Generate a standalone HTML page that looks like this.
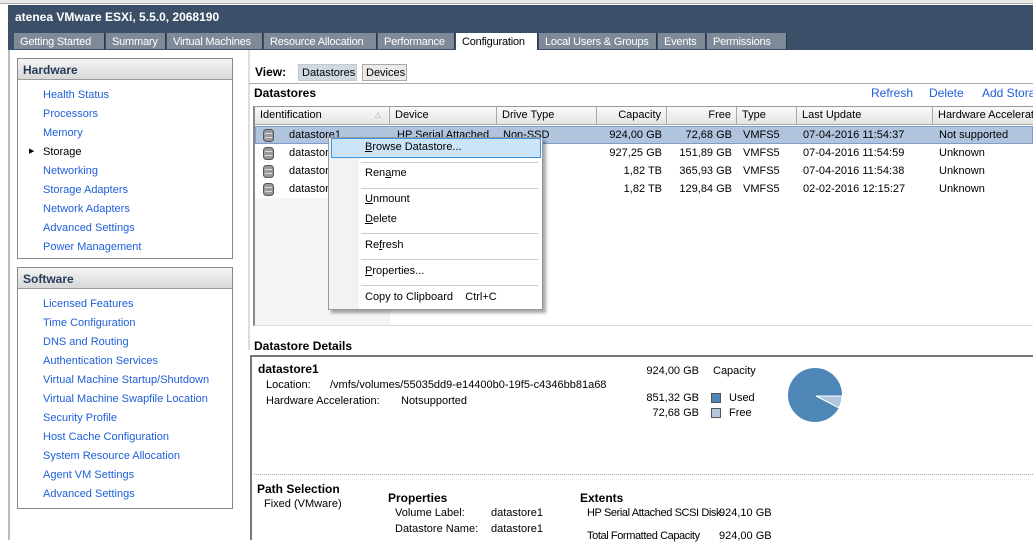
<!DOCTYPE html>
<html><head><meta charset="utf-8"><style>
*{margin:0;padding:0;box-sizing:border-box}
body{width:1033px;height:540px;overflow:hidden;background:#fff;font-family:"Liberation Sans","DejaVu Sans",sans-serif;font-size:11px;color:#000;position:relative}
.a{position:absolute;white-space:nowrap}
.b{font-weight:bold}
.lk{color:#1f5fd8}
.hdr{position:absolute;background:linear-gradient(#f4f4f4,#d8d8d8);border-bottom:1px solid #999;font-weight:bold;color:#243b5a;font-size:12px;padding:4px 5px}
.box{position:absolute;border:1px solid #888;background:#fff}
.tab{position:absolute;top:33px;height:16px;background:#7f8a99;color:#fff;font-size:11px;line-height:14px;padding:2px 0 0 6px;border-right:1px solid #2a3a4e;white-space:nowrap;overflow:hidden;letter-spacing:-0.2px}
.th{position:absolute;top:107px;height:18px;background:linear-gradient(#fafafa,#e4e4e4);border-right:1px solid #aaa;border-bottom:1px solid #aaa;padding:2px 5px;font-size:11px;white-space:nowrap;overflow:hidden}
.r{text-align:right}
.mi{position:absolute;left:36px;font-size:11px;white-space:nowrap}
.sep{position:absolute;left:32px;right:4px;height:1px;background:#ccc}
</style></head><body>
<div class="a" style="left:0;top:0;width:1033px;height:4px;background:#e8e8e8;border-bottom:1px solid #aaa"></div>
<div class="a" style="left:8px;top:5px;width:1025px;height:45px;background:#3b5068"></div>
<div class="a b" style="left:15px;top:10px;color:#fff;font-size:12px">atenea VMware ESXi, 5.5.0, 2068190</div>
<div class="tab" style="left:14px;width:91px">Getting Started</div>
<div class="tab" style="left:106px;width:60px">Summary</div>
<div class="tab" style="left:167px;width:96px">Virtual Machines</div>
<div class="tab" style="left:264px;width:113px">Resource Allocation</div>
<div class="tab" style="left:378px;width:77px">Performance</div>
<div class="tab" style="left:456px;width:82px;background:#fff;color:#000;height:17px">Configuration</div>
<div class="tab" style="left:539px;width:118px">Local Users &amp; Groups</div>
<div class="tab" style="left:658px;width:48px">Events</div>
<div class="tab" style="left:707px;width:80px">Permissions</div>
<div class="a" style="left:8px;top:50px;width:2px;height:490px;background:#bbb"></div>
<div class="a" style="left:248px;top:50px;width:2px;height:300px;background:#ddd"></div>

<div class="box" style="left:17px;top:58px;width:216px;height:201px">
<div class="hdr" style="left:0;top:0;width:214px;height:21px">Hardware</div></div>
<div class="a lk" style="left:43px;top:89px">Health Status</div>
<div class="a lk" style="left:43px;top:108px">Processors</div>
<div class="a lk" style="left:43px;top:127px">Memory</div>
<div class="a" style="left:29px;top:147px;font-size:7px">&#9654;</div>
<div class="a" style="left:43px;top:146px">Storage</div>
<div class="a lk" style="left:43px;top:165px">Networking</div>
<div class="a lk" style="left:43px;top:184px">Storage Adapters</div>
<div class="a lk" style="left:43px;top:203px">Network Adapters</div>
<div class="a lk" style="left:43px;top:222px">Advanced Settings</div>
<div class="a lk" style="left:43px;top:241px">Power Management</div>

<div class="box" style="left:17px;top:267px;width:216px;height:242px">
<div class="hdr" style="left:0;top:0;width:214px;height:21px">Software</div></div>
<div class="a lk" style="left:43px;top:298px">Licensed Features</div>
<div class="a lk" style="left:43px;top:317px">Time Configuration</div>
<div class="a lk" style="left:43px;top:336px">DNS and Routing</div>
<div class="a lk" style="left:43px;top:355px">Authentication Services</div>
<div class="a lk" style="left:43px;top:374px">Virtual Machine Startup/Shutdown</div>
<div class="a lk" style="left:43px;top:393px">Virtual Machine Swapfile Location</div>
<div class="a lk" style="left:43px;top:412px">Security Profile</div>
<div class="a lk" style="left:43px;top:431px">Host Cache Configuration</div>
<div class="a lk" style="left:43px;top:450px">System Resource Allocation</div>
<div class="a lk" style="left:43px;top:469px">Agent VM Settings</div>
<div class="a lk" style="left:43px;top:488px">Advanced Settings</div>

<div class="a b" style="left:255px;top:65px;font-size:12px">View:</div>
<div class="a" style="left:298px;top:64px;width:59px;height:17px;background:#d0d8e0;border:1px solid #c8c8c8;padding:2px 3px;font-size:11px">Datastores</div>
<div class="a" style="left:362px;top:64px;width:45px;height:17px;background:#eaeaea;border:1px solid #aaa;padding:2px 3px;font-size:11px">Devices</div>
<div class="a" style="left:249px;top:83px;width:784px;height:1px;background:#aaa"></div>
<div class="a b" style="left:254px;top:86px;font-size:12px">Datastores</div>
<div class="a lk" style="left:871px;top:86px;font-size:12px">Refresh</div>
<div class="a lk" style="left:929px;top:86px;font-size:12px">Delete</div>
<div class="a lk" style="left:982px;top:86px;font-size:12px">Add Storage...</div>

<div class="a" style="left:253px;top:106px;width:780px;height:220px;border-left:2px solid #888;border-top:2px solid #999;border-bottom:1px solid #ddd;background:#fff"></div>
<div class="a" style="left:255px;top:198px;width:135px;height:127px;background:#f4f4f4"></div>
<div class="th" style="left:255px;width:135px">Identification<span style="position:absolute;right:8px;top:3px;color:#aaa;font-size:8px">&#9651;</span></div>
<div class="th" style="left:390px;width:107px">Device</div>
<div class="th" style="left:497px;width:100px">Drive Type</div>
<div class="th r" style="left:597px;width:70px">Capacity</div>
<div class="th r" style="left:667px;width:70px">Free</div>
<div class="th" style="left:737px;width:60px">Type</div>
<div class="th" style="left:797px;width:136px">Last Update</div>
<div class="th" style="left:933px;width:110px">Hardware Acceleration</div>
<div class="a" style="left:255px;top:126px;width:778px;height:18px;background:#b0c4de;border:1px solid #7f9dc6"></div>

<svg class="a" style="left:262px;top:128px" width="14" height="70" viewBox="0 0 14 70">
<g fill="#999" stroke="#555" stroke-width="1">
<rect x="1.5" y="1.5" width="10" height="12" rx="3"/><rect x="1.5" y="19.5" width="10" height="12" rx="3"/><rect x="1.5" y="37.5" width="10" height="12" rx="3"/><rect x="1.5" y="55.5" width="10" height="12" rx="3"/></g>
<g stroke="#ddd"><path d="M3 5.5h7M3 9.5h7M3 23.5h7M3 27.5h7M3 41.5h7M3 45.5h7M3 59.5h7M3 63.5h7"/></g></svg>

<div class="a" style="left:289px;top:129px">datastore1</div>
<div class="a" style="left:397px;top:129px">HP Serial Attached</div>
<div class="a" style="left:503px;top:129px">Non-SSD</div>
<div class="a" style="left:289px;top:147px">datastore2</div>
<div class="a" style="left:289px;top:165px">datastore3</div>
<div class="a" style="left:289px;top:183px">datastore4</div>

<div class="a r" style="left:597px;width:65px;top:129px">924,00 GB</div>
<div class="a r" style="left:597px;width:65px;top:147px">927,25 GB</div>
<div class="a r" style="left:597px;width:65px;top:165px">1,82 TB</div>
<div class="a r" style="left:597px;width:65px;top:183px">1,82 TB</div>
<div class="a r" style="left:667px;width:65px;top:129px">72,68 GB</div>
<div class="a r" style="left:667px;width:65px;top:147px">151,89 GB</div>
<div class="a r" style="left:667px;width:65px;top:165px">365,93 GB</div>
<div class="a r" style="left:667px;width:65px;top:183px">129,84 GB</div>
<div class="a" style="left:743px;top:129px">VMFS5</div>
<div class="a" style="left:743px;top:147px">VMFS5</div>
<div class="a" style="left:743px;top:165px">VMFS5</div>
<div class="a" style="left:743px;top:183px">VMFS5</div>
<div class="a" style="left:803px;top:129px">07-04-2016 11:54:37</div>
<div class="a" style="left:803px;top:147px">07-04-2016 11:54:59</div>
<div class="a" style="left:803px;top:165px">07-04-2016 11:54:38</div>
<div class="a" style="left:803px;top:183px">02-02-2016 12:15:27</div>
<div class="a" style="left:939px;top:129px">Not supported</div>
<div class="a" style="left:939px;top:147px">Unknown</div>
<div class="a" style="left:939px;top:165px">Unknown</div>
<div class="a" style="left:939px;top:183px">Unknown</div>

<div class="a" style="left:328px;top:137px;width:215px;height:173px;background:#f2f2f2;border:1px solid #999;box-shadow:3px 3px 3px rgba(0,0,0,.35)">
<div class="a" style="left:30px;top:0;width:183px;height:171px;background:#fff"></div>
<div class="a" style="left:2px;top:0;width:210px;height:20px;background:#cce4f7;border:1px solid #3f94e0"></div>
<div class="mi" style="top:3px"><u>B</u>rowse Datastore...</div>
<div class="sep" style="top:24px"></div>
<div class="mi" style="top:29px">Ren<u>a</u>me</div>
<div class="sep" style="top:50px"></div>
<div class="mi" style="top:55px"><u>U</u>nmount</div>
<div class="mi" style="top:75px"><u>D</u>elete</div>
<div class="sep" style="top:95px"></div>
<div class="mi" style="top:101px">Re<u>f</u>resh</div>
<div class="sep" style="top:121px"></div>
<div class="mi" style="top:127px"><u>P</u>roperties...</div>
<div class="sep" style="top:147px"></div>
<div class="mi" style="top:153px">Copy to Clipboard&nbsp;&nbsp;&nbsp;&nbsp;Ctrl+C</div>
</div>

<div class="a b" style="left:254px;top:339px;font-size:12px">Datastore Details</div>
<div class="a" style="left:250px;top:355px;width:783px;height:185px;border-left:2px solid #777;border-top:2px solid #777"></div>
<div class="a b" style="left:258px;top:362px;font-size:12px">datastore1</div>
<div class="a" style="left:266px;top:379px">Location:</div>
<div class="a" style="left:330px;top:379px">/vmfs/volumes/55035dd9-e14400b0-19f5-c4346bb81a68</div>
<div class="a" style="left:266px;top:395px">Hardware Acceleration:</div>
<div class="a" style="left:401px;top:395px">Notsupported</div>
<div class="a r" style="left:620px;width:79px;top:365px">924,00 GB</div>
<div class="a" style="left:713px;top:365px">Capacity</div>
<div class="a r" style="left:620px;width:79px;top:392px">851,32 GB</div>
<div class="a" style="left:711px;top:393px;width:10px;height:10px;background:#4e86b8;border:1px solid #555"></div>
<div class="a" style="left:729px;top:392px">Used</div>
<div class="a r" style="left:620px;width:79px;top:407px">72,68 GB</div>
<div class="a" style="left:711px;top:408px;width:10px;height:10px;background:#b2c6de;border:1px solid #555"></div>
<div class="a" style="left:729px;top:407px">Free</div>
<svg class="a" style="left:780px;top:360px" width="70" height="70" viewBox="780 360 70 70">
<circle cx="815" cy="395" r="27" fill="#4e86b8"/>
<path d="M816 396 L842 396 A27 27 0 0 1 839 408 Z" fill="#b2c6de" stroke="#fff" stroke-width="1"/></svg>
<div class="a" style="left:254px;top:474px;width:779px;border-top:1px dotted #aaa"></div>
<div class="a b" style="left:257px;top:482px;font-size:12px">Path Selection</div>
<div class="a" style="left:264px;top:498px">Fixed (VMware)</div>
<div class="a b" style="left:388px;top:491px;font-size:12px">Properties</div>
<div class="a" style="left:395px;top:507px">Volume Label:</div>
<div class="a" style="left:491px;top:507px">datastore1</div>
<div class="a" style="left:395px;top:523px">Datastore Name:</div>
<div class="a" style="left:491px;top:523px">datastore1</div>
<div class="a b" style="left:580px;top:491px;font-size:12px">Extents</div>
<div class="a" style="left:587px;top:507px;letter-spacing:-0.4px">HP Serial Attached SCSI Disk.</div>
<div class="a" style="left:719px;top:507px">924,10 GB</div>
<div class="a" style="left:587px;top:530px;letter-spacing:-0.4px">Total Formatted Capacity</div>
<div class="a" style="left:719px;top:530px">924,00 GB</div>
</body></html>
